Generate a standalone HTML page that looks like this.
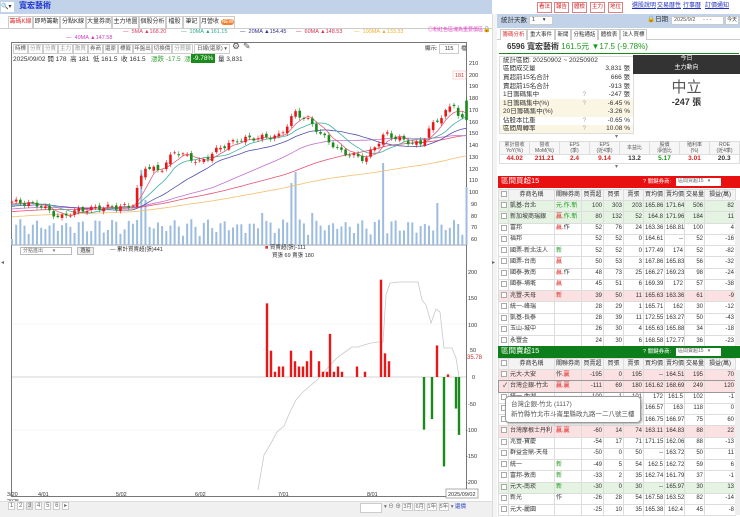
<!DOCTYPE html>
<html><head><meta charset="utf-8">
<style>
*{box-sizing:border-box;margin:0;padding:0}
body{width:740px;height:517px;overflow:hidden;background:#fff;font-family:"Liberation Sans","Noto Sans CJK TC",sans-serif;font-size:7px;color:#333;position:relative;line-height:1.1}
.a{position:absolute;white-space:nowrap}
.tab{position:absolute;top:16px;height:12px;border:1px solid #ccc;border-bottom:none;background:#fff;font-size:6px;line-height:11px;text-align:center;overflow:hidden;white-space:nowrap}
.btnr{position:absolute;top:2px;height:11px;width:15px;border:1px solid #e08080;color:#d02020;font-size:5.5px;line-height:9px;text-align:center;overflow:hidden;background:#fff}
.lnk{position:absolute;top:3px;color:#2030c0;text-decoration:underline;font-size:6px}
table{border-collapse:collapse;font-size:6px;table-layout:fixed}
.tb td{border:1px solid #ddd;height:11.25px;line-height:9px;padding:0 1px;text-align:right;white-space:nowrap;overflow:hidden}
.tb td.l{text-align:left}
.tb tr.h td{background:#f3f3f3;text-align:center;height:11px}
.pk td{background:#fbe1e1}
.gn td{background:#e5f3e3}
.cb{display:inline-block;width:6px;height:6px;border:1px solid #aaa;background:#fff;vertical-align:middle}
.st td{height:8.6px;line-height:8px;padding:0 3px;font-size:6.5px;white-space:nowrap;overflow:hidden}
.bg td{background:#fbf5e3}
.tool{position:absolute;top:44px;height:10px;border:1px solid #ccc;font-size:5.5px;line-height:8px;text-align:center;overflow:hidden;color:#999;background:#fff}
</style></head><body>

<div class="a" style="left:0;top:0;width:492px;height:14px;background:#c2d2e9"></div>
<div class="a" style="left:1px;top:2px;width:13px;height:10px;background:#fff;font-size:6px;line-height:10px">🔍▾</div>
<div class="a" style="left:19px;top:2px;color:#1a2fd0;font-weight:bold;font-size:8px">寬宏藝術</div>

<div class="a" style="left:0;top:14px;width:492px;height:15px;background:#fff;border-bottom:1px solid #ccc"></div>
<div class="tab" style="left:8px;width:25px;color:#e03030">籌碼K線</div>
<div class="tab" style="left:33px;width:27px">即時籌動</div>
<div class="tab" style="left:60px;width:26px">分點K線</div>
<div class="tab" style="left:86px;width:26px">大量券商</div>
<div class="tab" style="left:112px;width:27px">主力地圖</div>
<div class="tab" style="left:139px;width:27px">個股分析</div>
<div class="tab" style="left:166px;width:17px">檔股</div>
<div class="tab" style="left:183px;width:17px">筆記</div>
<div class="tab" style="left:200px;width:35px">月營收 <span style="background:#f08030;color:#fff;border-radius:4px;padding:0 1px;font-size:5px">NEW</span></div>

<div class="a" style="left:123px;top:29px;font-size:5.5px;color:#e04060">— &nbsp;5MA ▲168.20</div>
<div class="a" style="left:181px;top:29px;font-size:5.5px;color:#30a890">— &nbsp;10MA ▲161.15</div>
<div class="a" style="left:240px;top:29px;font-size:5.5px;color:#303090">— &nbsp;20MA ▲154.45</div>
<div class="a" style="left:296px;top:29px;font-size:5.5px;color:#e03050">— &nbsp;60MA ▲148.53</div>
<div class="a" style="left:354px;top:29px;font-size:5.5px;color:#f0b030">— &nbsp;100MA ▲133.33</div>
<div class="a" style="left:66px;top:35px;font-size:5.5px;color:#d040c0">— &nbsp;40MA ▲147.58</div>
<div class="a" style="left:428px;top:28px;font-size:5px;color:#e040c0">◎粉紅色區塊為重要價區</div>
<div class="a" style="left:483px;top:27px;font-size:6px">🔒</div>

<div class="a" style="left:11px;top:42px;width:456px;height:455px;border:1px solid #777"></div>
<div class="tool" style="left:13px;width:15px;color:#555">時標</div>
<div class="tool" style="left:28px;width:15px">分買</div>
<div class="tool" style="left:43px;width:15px">分賣</div>
<div class="tool" style="left:58px;width:15px">主力</div>
<div class="tool" style="left:73px;width:15px">散買</div>
<div class="tool" style="left:88px;width:15px;color:#555">券商</div>
<div class="tool" style="left:103px;width:15px;color:#555">還原</div>
<div class="tool" style="left:118px;width:15px;color:#555">標籤</div>
<div class="tool" style="left:133px;width:19px;color:#555">年盤出</div>
<div class="tool" style="left:152px;width:20px;color:#555">切換價</div>
<div class="tool" style="left:172px;width:21px">分買額</div>
<div class="tool" style="left:194px;width:36px;color:#555">日線(還原) ▾</div>
<div class="a" style="left:232px;top:42px;font-size:9px;color:#555">⚙</div>
<div class="a" style="left:243px;top:42px;font-size:9px;color:#555">✎</div>
<div class="a" style="left:425px;top:46px;font-size:5.5px">顯示:</div>
<div class="a" style="left:439px;top:44px;width:20px;height:10px;border:1px solid #ccc;font-size:5.5px;text-align:center;line-height:8px">115</div>
<div class="a" style="left:461px;top:46px;font-size:5.5px">檔</div>
<div class="a" style="left:13px;top:56px;font-size:6.5px;color:#333">2025/09/02 開 178 &nbsp;高 181 &nbsp;低 161.5 &nbsp;收 161.5 &nbsp; <span style="color:#30a030">漲跌 -17.5 &nbsp;漲幅</span></div>
<div class="a" style="left:191px;top:54px;width:24px;height:9px;background:#1a8a1a;color:#fff;font-size:6.5px;line-height:9px;text-align:center">-9.78%</div>
<div class="a" style="left:218px;top:56px;font-size:6.5px">量 3,831</div>

<svg class="a" style="left:0;top:0" width="492" height="517" id="ch">
<g font-size="5.5" fill="#333" font-family="Liberation Sans">
<text x="469" y="65">210</text><text x="469" y="77">200</text><text x="469" y="88">190</text><text x="469" y="100">180</text><text x="469" y="112">170</text><text x="469" y="124">160</text><text x="469" y="135">150</text><text x="469" y="147">140</text><text x="469" y="159">130</text><text x="469" y="171">120</text><text x="469" y="182">110</text><text x="469" y="194">100</text><text x="471" y="206">90</text><text x="471" y="218">80</text><text x="471" y="229">70</text><text x="471" y="241">60</text>
<text x="468" y="274">200</text><text x="468" y="300">150</text><text x="468" y="327">100</text><text x="470" y="352">50</text><text x="472" y="379">0</text><text x="468" y="406">-50</text><text x="466" y="432">-100</text><text x="466" y="458">-150</text><text x="466" y="484">-200</text>
</g>
<rect x="453" y="71" width="13" height="8" fill="#fff" stroke="#f0b0b0" stroke-width=".5"/>
<text x="455" y="77" font-size="5.5" fill="#e03030">181</text>
<text x="467" y="359" font-size="6" fill="#c03030">35.78</text>
<line x1="12" y1="245" x2="466" y2="245" stroke="#888" stroke-width=".7"/>
<line x1="12" y1="377" x2="466" y2="377" stroke="#aaa" stroke-width=".5"/>
<line x1="12" y1="324" x2="466" y2="324" stroke="#eee" stroke-width=".5"/>
<line x1="12" y1="430" x2="466" y2="430" stroke="#eee" stroke-width=".5"/>
<g id="vol"></g><g id="ma"></g><g id="cdl"></g>
<polyline fill="none" stroke="#c8c8c8" stroke-width=".8" points="258,490 264,455 270,445 277,432 284,426 290,412 296,400 303,392 310,386 317,380 324,372 331,364 338,357 345,352 352,347 358,347 364,345 371,343 378,342 383,342 386,295 390,283 400,282 418,282 422,300 426,305 431,323 436,309 440,312 444,348 452,348 456,358 459,377"/>
<g id="lb"></g>
<g font-size="5.5" fill="#333" font-family="Liberation Sans">
<text x="7" y="496">3/20</text><text x="7" y="503">2025</text><text x="38" y="496">4/01</text><text x="116" y="496">5/02</text><text x="195" y="496">6/02</text><text x="278" y="496">7/01</text><text x="367" y="496">8/01</text>
</g>
<rect x="446" y="489" width="32" height="9" fill="#fff" stroke="#777" stroke-width=".6"/>
<text x="448" y="496" font-size="5.5" fill="#333">2025/09/02</text>
</svg>

<div class="a" style="left:20px;top:247px;width:52px;height:8px;border:1px solid #bbb;font-size:5px;line-height:6px;padding-left:2px;color:#666">分點進出 &nbsp; &nbsp; &nbsp; ▾</div>
<div class="a" style="left:77px;top:247px;width:17px;height:8px;border:1px solid #bbb;background:#eee;font-size:5px;line-height:6px;text-align:center">選股</div>
<div class="a" style="left:110px;top:247px;font-size:5.5px">— 累計買賣超(張)441</div>
<div class="a" style="left:265px;top:245px;font-size:5.5px"><span style="color:#e03030">■</span> 買賣超(張)-111</div>
<div class="a" style="left:272px;top:253px;font-size:5.5px">買張 69 賣張 180</div>

<div class="a" style="left:0;top:501px;width:492px;height:16px;background:#f0f0f0;border-top:1px solid #ddd"></div>
<div class="a" style="left:8px;top:503px;font-size:6px;color:#666">
<span style="border:1px solid #ccc;padding:0 1px;background:#fff">1</span> <span style="border:1px solid #ccc;padding:0 1px;background:#fff">2</span> <span style="border:1px solid #ccc;padding:0 1px;background:#ddd">3</span> <span style="border:1px solid #ccc;padding:0 1px;background:#fff">4</span> <span style="border:1px solid #ccc;padding:0 1px;background:#fff">5</span> <span style="border:1px solid #ccc;padding:0 1px;background:#fff">6</span> <span style="border:1px solid #ccc;padding:0 1px;background:#fff">▸</span></div>
<div class="a" style="left:360px;top:503px;width:22px;height:10px;border:1px solid #ccc;background:#fff"></div>
<div class="a" style="left:384px;top:504px;font-size:5.5px;color:#666">▾ ⊖ ⊕ <span style="border:1px solid #ccc;background:#fff">3月</span> <span style="border:1px solid #ccc;background:#fff">6月</span> <span style="border:1px solid #ccc;background:#fff">1年</span> <span style="border:1px solid #ccc;background:#fff">5年</span> ▾ <span style="color:#2040c0">還價</span></div>

<div class="a" style="left:492px;top:14px;width:5px;height:503px;background:#f4f4f4;border-left:1px solid #ddd"></div>
<div class="a" style="left:1px;top:260px;font-size:6px;color:#666">◂</div>
<div class="a" style="left:492px;top:260px;font-size:6px;color:#666">▸</div>

<!-- RIGHT PANEL -->
<div class="btnr" style="left:537px">看法</div>
<div class="btnr" style="left:554px">報告</div>
<div class="btnr" style="left:572px">體檢</div>
<div class="btnr" style="left:590px">主力</div>
<div class="btnr" style="left:608px">地位</div>
<div class="lnk" style="left:632px">選股說明</div>
<div class="lnk" style="left:657px">交易曆性</div>
<div class="lnk" style="left:683px">行事曆</div>
<div class="lnk" style="left:705px">訂價通知</div>

<div class="a" style="left:497px;top:14px;width:243px;height:14px;background:#c2d2e9"></div>
<div class="a" style="left:501px;top:17px;font-size:6.5px">統計天數</div>
<div class="a" style="left:529px;top:16px;width:24px;height:9px;background:#fff;border:1px solid #ccc;font-size:5.5px;line-height:7px;padding-left:2px">1 &nbsp; &nbsp; ▾</div>
<div class="a" style="left:647px;top:16px;font-size:6.5px">🔒日期</div>
<div class="a" style="left:671px;top:16px;width:53px;height:9px;background:#fff;border:1px solid #ccc;font-size:5.5px;line-height:7px;padding-left:2px;color:#555">2025/9/2 &nbsp; &nbsp; - - -</div>
<div class="a" style="left:725px;top:16px;width:14px;height:9px;background:#fff;border:1px solid #ccc;font-size:5px;line-height:7px;text-align:center">今天</div>

<div class="a" style="left:497px;top:28px;width:243px;height:12px;border-bottom:1px solid #ccc"></div>
<div class="tab" style="left:500px;top:29px;width:27px;height:11px;line-height:10px;font-size:5.5px;color:#e03030">籌碼分析</div>
<div class="tab" style="left:527px;top:29px;width:28px;height:11px;line-height:10px;font-size:5.5px">重大事件</div>
<div class="tab" style="left:555px;top:29px;width:16px;height:11px;line-height:10px;font-size:5.5px">新聞</div>
<div class="tab" style="left:571px;top:29px;width:27px;height:11px;line-height:10px;font-size:5.5px">分點通話</div>
<div class="tab" style="left:598px;top:29px;width:22px;height:11px;line-height:10px;font-size:5.5px">體檢表</div>
<div class="tab" style="left:620px;top:29px;width:27px;height:11px;line-height:10px;font-size:5.5px">法人買標</div>

<div class="a" style="left:499px;top:41px;width:240px;height:13px;border-bottom:1px solid #1a8a1a"></div>
<div class="a" style="left:507px;top:43px;font-size:8px;font-weight:bold">6596 寬宏藝術 <span style="color:#1a9a1a;font-weight:normal">161.5元 ▼17.5 (-9.78%)</span></div>

<table class="st a" style="left:499px;top:56px;width:134px;border:1px solid #ddd">
<colgroup><col style="width:80px"><col style="width:14px"><col style="width:40px"></colgroup>
<tr><td colspan="3">統計區間: 20250902 ~ 20250902</td></tr>
<tr><td>區間成交量</td><td></td><td style="text-align:right">3,831 張</td></tr>
<tr><td>買超前15名合計</td><td></td><td style="text-align:right">666 張</td></tr>
<tr><td>賣超前15名合計</td><td></td><td style="text-align:right">-913 張</td></tr>
<tr><td>1日籌碼集中</td><td style="color:#aaa">?</td><td style="text-align:right">-247 張</td></tr>
<tr class="bg"><td>1日籌碼集中(%)</td><td style="color:#aaa">?</td><td style="text-align:right">-6.45 %</td></tr>
<tr class="bg"><td>20日籌碼集中(%)</td><td></td><td style="text-align:right">-3.26 %</td></tr>
<tr><td>佔股本比重</td><td style="color:#aaa">?</td><td style="text-align:right">-0.65 %</td></tr>
<tr class="bg"><td>區間周轉率</td><td style="color:#aaa">?</td><td style="text-align:right">10.08 %</td></tr>
</table>
<div class="a" style="left:633px;top:55px;width:107px;height:19px;background:#333;color:#fff;font-size:6px;text-align:center;line-height:9px">今日<br>主力動向</div>
<div class="a" style="left:633px;top:80px;width:107px;text-align:center;font-size:15px;color:#555">中立</div>
<div class="a" style="left:633px;top:98px;width:107px;text-align:center;font-size:9px;font-weight:bold">-247 張</div>
<div class="a" style="left:615px;top:134px;font-size:6px;color:#777">▾</div>

<table class="a" style="left:499px;top:141px;width:241px;font-size:5px;text-align:center;border:1px solid #ddd;line-height:6px">
<tr style="background:#f6f6f6;height:13px;color:#555"><td style="border:1px solid #ddd">累計營收<br>YoY(%)</td><td style="border:1px solid #ddd">營收<br>MoM(%)</td><td style="border:1px solid #ddd">EPS<br>(季)</td><td style="border:1px solid #ddd">EPS<br>(近4季)</td><td style="border:1px solid #ddd">本益比</td><td style="border:1px solid #ddd">股價<br>淨值比</td><td style="border:1px solid #ddd">殖利率<br>(%)</td><td style="border:1px solid #ddd">ROE<br>(近4季)</td></tr>
<tr style="height:9px;font-weight:bold;font-size:6.5px"><td style="color:#e02020">44.02</td><td style="color:#e02020">211.21</td><td style="color:#e02020">2.4</td><td style="color:#e02020">9.14</td><td>13.2</td><td style="color:#1a9a1a">5.17</td><td style="color:#e02020">3.01</td><td>20.3</td></tr>
</table>
<div class="a" style="left:615px;top:164px;font-size:6px;color:#777">▾</div>

<div class="a" style="left:498px;top:176px;width:242px;height:12px;background:#e81010"></div>
<div class="a" style="left:501px;top:177px;color:#fff;font-size:7.5px">區間買超15</div>
<div class="a" style="left:643px;top:179px;color:#fff;font-size:5.5px">? 關鍵券商:</div>
<div class="a" style="left:676px;top:178px;width:45px;height:8px;background:#fff;font-size:5px;line-height:7px;padding-left:2px;color:#666">區間買超15 &nbsp; ▾</div>
<table class="tb a" style="left:498px;top:189px;width:237px">
<colgroup><col style="width:10px"><col style="width:46px"><col style="width:27px"><col style="width:22px"><col style="width:20px"><col style="width:20px"><col style="width:21px"><col style="width:20px"><col style="width:20px"><col style="width:31px"></colgroup>
<tr class="h"><td><span class="cb"></span></td><td>券商名稱</td><td>關聯券商</td><td>買賣超</td><td>買張</td><td>賣張</td><td>買均價</td><td>賣均價</td><td>交易量</td><td>損益(萬)</td></tr>
<tr class="gn"><td><span class="cb"></span></td><td class="l">凱基-台北</td><td class="l" style="color:#1a9a1a">元.作.新</td><td>100</td><td>303</td><td>203</td><td>165.86</td><td>171.64</td><td>506</td><td>82</td></tr>
<tr class="gn"><td><span class="cb"></span></td><td class="l">新加坡商瑞銀</td><td class="l"><span style="color:#e02020">贏</span><span style="color:#1a9a1a">.作.新</span></td><td>80</td><td>132</td><td>52</td><td>164.8</td><td>171.96</td><td>184</td><td>11</td></tr>
<tr><td><span class="cb"></span></td><td class="l">富邦</td><td class="l"><span style="color:#e02020">贏</span>.作</td><td>52</td><td>76</td><td>24</td><td>163.36</td><td>168.81</td><td>100</td><td>4</td></tr>
<tr><td><span class="cb"></span></td><td class="l">福邦</td><td></td><td>52</td><td>52</td><td>0</td><td>164.61</td><td>--</td><td>52</td><td>-16</td></tr>
<tr><td><span class="cb"></span></td><td class="l">國票-新北法人</td><td class="l" style="color:#1a9a1a">新</td><td>52</td><td>52</td><td>0</td><td>177.49</td><td>174</td><td>52</td><td>-82</td></tr>
<tr><td><span class="cb"></span></td><td class="l">國票-台南</td><td class="l" style="color:#e02020">贏</td><td>50</td><td>53</td><td>3</td><td>167.86</td><td>165.83</td><td>56</td><td>-32</td></tr>
<tr><td><span class="cb"></span></td><td class="l">國泰-敦南</td><td class="l"><span style="color:#e02020">贏</span>.作</td><td>48</td><td>73</td><td>25</td><td>166.27</td><td>169.23</td><td>98</td><td>-24</td></tr>
<tr><td><span class="cb"></span></td><td class="l">國泰-埔墘</td><td class="l" style="color:#e02020">贏</td><td>45</td><td>51</td><td>6</td><td>169.39</td><td>172</td><td>57</td><td>-38</td></tr>
<tr class="pk"><td><span class="cb"></span></td><td class="l">兆豐-天母</td><td class="l" style="color:#e02020">新</td><td>39</td><td>50</td><td>11</td><td>165.63</td><td>163.36</td><td>61</td><td>-9</td></tr>
<tr><td><span class="cb"></span></td><td class="l">統一-峰瑞</td><td></td><td>28</td><td>29</td><td>1</td><td>165.71</td><td>162</td><td>30</td><td>-12</td></tr>
<tr><td><span class="cb"></span></td><td class="l">凱基-長泰</td><td></td><td>28</td><td>39</td><td>11</td><td>172.55</td><td>163.27</td><td>50</td><td>-43</td></tr>
<tr><td><span class="cb"></span></td><td class="l">玉山-城中</td><td></td><td>26</td><td>30</td><td>4</td><td>165.63</td><td>165.88</td><td>34</td><td>-18</td></tr>
<tr><td><span class="cb"></span></td><td class="l">永豐金</td><td></td><td>24</td><td>30</td><td>6</td><td>168.58</td><td>172.77</td><td>36</td><td>-23</td></tr>
</table>
<div class="a" style="left:735px;top:200px;width:5px;height:145px;background:#eee"></div>

<div class="a" style="left:498px;top:346px;width:242px;height:12px;background:#0e7e1a"></div>
<div class="a" style="left:501px;top:347px;color:#fff;font-size:7.5px">區間賣超15</div>
<div class="a" style="left:643px;top:349px;color:#fff;font-size:5.5px">? 關鍵券商:</div>
<div class="a" style="left:676px;top:348px;width:45px;height:8px;background:#fff;font-size:5px;line-height:7px;padding-left:2px;color:#666">區間賣超15 &nbsp; ▾</div>
<table class="tb a" style="left:498px;top:358px;width:237px">
<colgroup><col style="width:10px"><col style="width:46px"><col style="width:27px"><col style="width:22px"><col style="width:20px"><col style="width:20px"><col style="width:21px"><col style="width:20px"><col style="width:20px"><col style="width:31px"></colgroup>
<tr class="h"><td><span class="cb"></span></td><td>券商名稱</td><td>關聯券商</td><td>買賣超</td><td>買張</td><td>賣張</td><td>買均價</td><td>賣均價</td><td>交易量</td><td>損益(萬)</td></tr>
<tr class="pk"><td><span class="cb"></span></td><td class="l">元大-大安</td><td class="l">作.<span style="color:#e02020">贏</span></td><td>-195</td><td>0</td><td>195</td><td>--</td><td>164.51</td><td>195</td><td>70</td></tr>
<tr class="pk" style="outline:1px solid #999"><td>✓</td><td class="l">台灣企銀-竹北</td><td class="l" style="color:#e02020">贏.贏</td><td>-111</td><td>69</td><td>180</td><td>161.62</td><td>168.69</td><td>249</td><td>120</td></tr>
<tr><td><span class="cb"></span></td><td class="l">統一-內湖</td><td></td><td>-100</td><td>1</td><td>101</td><td>172</td><td>161.5</td><td>102</td><td>-1</td></tr>
<tr><td><span class="cb"></span></td><td class="l">凱基</td><td></td><td>-88</td><td>15</td><td>103</td><td>166.57</td><td>163</td><td>118</td><td>0</td></tr>
<tr><td><span class="cb"></span></td><td class="l">元大</td><td></td><td>-75</td><td>0</td><td>75</td><td>166.75</td><td>166.97</td><td>75</td><td>60</td></tr>
<tr class="pk"><td><span class="cb"></span></td><td class="l">台灣摩根士丹利</td><td class="l" style="color:#e02020">贏.贏</td><td>-60</td><td>14</td><td>74</td><td>163.11</td><td>164.83</td><td>88</td><td>22</td></tr>
<tr><td><span class="cb"></span></td><td class="l">兆豐-寶慶</td><td></td><td>-54</td><td>17</td><td>71</td><td>171.15</td><td>162.06</td><td>88</td><td>-13</td></tr>
<tr><td><span class="cb"></span></td><td class="l">群益金鼎-天母</td><td></td><td>-50</td><td>0</td><td>50</td><td>--</td><td>163.72</td><td>50</td><td>11</td></tr>
<tr><td><span class="cb"></span></td><td class="l">統一</td><td class="l" style="color:#1a9a1a">新</td><td>-49</td><td>5</td><td>54</td><td>162.5</td><td>162.72</td><td>59</td><td>6</td></tr>
<tr><td><span class="cb"></span></td><td class="l">富邦-敦南</td><td class="l" style="color:#1a9a1a">新</td><td>-33</td><td>2</td><td>35</td><td>162.74</td><td>161.79</td><td>37</td><td>-1</td></tr>
<tr class="gn"><td><span class="cb"></span></td><td class="l">元大-南崁</td><td class="l" style="color:#1a9a1a">新</td><td>-30</td><td>0</td><td>30</td><td>--</td><td>165.97</td><td>30</td><td>13</td></tr>
<tr><td><span class="cb"></span></td><td class="l">新光</td><td class="l">作</td><td>-26</td><td>28</td><td>54</td><td>167.58</td><td>163.52</td><td>82</td><td>-14</td></tr>
<tr><td><span class="cb"></span></td><td class="l">元大-麗園</td><td></td><td>-25</td><td>10</td><td>35</td><td>165.38</td><td>162.4</td><td>45</td><td>-8</td></tr>
</table>
<div class="a" style="left:735px;top:370px;width:5px;height:145px;background:#eee"></div>

<div class="a" style="left:505px;top:396px;width:136px;height:27px;background:#fff;border:1px solid #999;border-radius:4px;box-shadow:1px 1px 2px #aaa;font-size:6.5px;color:#555;padding:3px 5px;line-height:10px;overflow:hidden">台灣企銀-竹北 (1117)<br>新竹縣竹北市斗崙里縣政九路一二八號三樓</div>

<script>
(function(){
var NS="http://www.w3.org/2000/svg";
function el(g,t,a){var e=document.createElementNS(NS,t);for(var k in a)e.setAttribute(k,a[k]);document.getElementById(g).appendChild(e);}
function Y(p){return 63+(210-p)*1.175;}
var kp=[[12,92],[40,89],[60,78],[75,84],[100,87],[132,88],[137,102],[145,122],[160,118],[175,135],[200,125],[220,138],[240,145],[280,148],[295,168],[310,160],[320,150],[340,135],[365,128],[385,150],[400,145],[420,140],[430,155],[456,177],[459,161.5]];
function P(x){for(var i=1;i<kp.length;i++){if(x<=kp[i][0]){var a=kp[i-1],b=kp[i];return a[1]+(b[1]-a[1])*(x-a[0])/(b[0]-a[0]);}}return kp[kp.length-1][1];}
var N=110,cl=[],xs=[];
for(var i=0;i<N;i++){var x=12+i*4.17;xs.push(x);cl.push(P(x)+Math.sin(i*1.7)*2.2);}
cl[N-1]=161.5;
var hist=[];for(var j=0;j<100;j++)hist.push(68+j*0.22+Math.sin(j)*1.5);
var all=hist.concat(cl);
function ma(n){var pts=[];for(var i=0;i<N;i++){var s=0;for(var k=0;k<n;k++)s+=all[100+i-k];pts.push(xs[i].toFixed(1)+","+Y(s/n).toFixed(1));}return pts.join(" ");}
[[100,"#f3c070"],[60,"#e85070"],[40,"#c070d0"],[20,"#5050b0"],[10,"#40b0a0"],[5,"#e06080"]].forEach(function(m){el("ma","polyline",{points:ma(m[0]),fill:"none",stroke:m[1],"stroke-width":".8"});});
for(var i=0;i<N;i++){var h=6+Math.abs(Math.sin(i*2.3))*14+Math.abs(Math.sin(i*0.7))*6;if(i==31)h=75;if(i==32)h=45;if(i==68)h=73;if(i==67)h=62;if(i==89)h=82;if(i==109)h=58;if(i==72)h=32;if(i==60)h=32;if(i==102)h=42;if(i==30)h=25;
el("vol","rect",{x:xs[i]-1,y:245-h,width:2,height:h,fill:"#9dbde0"});}
for(var i=0;i<N;i++){var c=cl[i],o=i==0?c:cl[i-1]+Math.sin(i*3.1)*1.5;if(i==N-1)o=178;var up=c>=o;var col=up?"#e81818":"#1a8a1a";
var hi=Math.max(o,c)+1+Math.abs(Math.sin(i*1.3))*1.5,lo=Math.min(o,c)-1-Math.abs(Math.cos(i))*1.5;if(i==N-1)hi=181;
el("cdl","line",{x1:xs[i],x2:xs[i],y1:Y(hi),y2:Y(lo),stroke:col,"stroke-width":".6"});
var t=Y(Math.max(o,c)),b=Y(Math.min(o,c));el("cdl","rect",{x:xs[i]-1.3,y:t,width:2.6,height:Math.max(b-t,.8),fill:col});}
var rb=[[267,140],[271,50],[275,10],[279,20],[283,20],[291,50],[295,30],[299,20],[303,20],[307,30],[311,50],[319,30],[323,10],[327,10],[330,82],[334,10],[338,20],[342,10],[357,20],[365,10],[381,185],[385,45],[389,30],[437,60],[448,5],[424,-100],[432,-80],[444,-170],[456,-60],[459,-110]];
rb.forEach(function(r){var h=Math.abs(r[1])*0.526;el("lb","rect",{x:r[0]-1.2,y:r[1]>0?377-h:377,width:2.4,height:h,fill:r[1]>0?"#e81818":"#1a8a1a"});});
})();
</script>
</body></html>
